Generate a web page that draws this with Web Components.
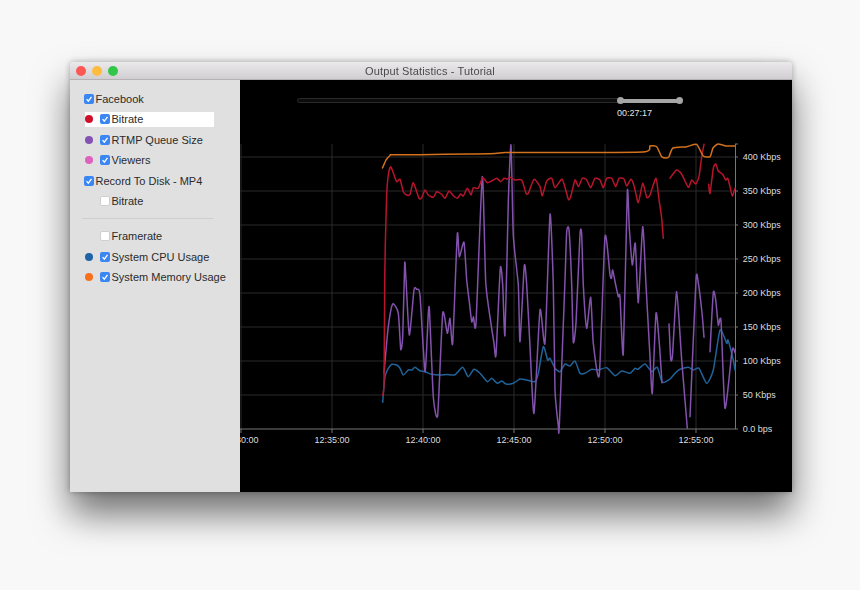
<!DOCTYPE html>
<html>
<head>
<meta charset="utf-8">
<title>Output Statistics - Tutorial</title>
<style>
    html, body { margin: 0; height: 100%; overflow: hidden; background: #f8f8f8; }
    body { padding: 62px 0 0 70px; box-sizing: border-box; font-family: "Liberation Sans", Arial, sans-serif; }
</style>
</head>
<body>
<app-window title="Output Statistics - Tutorial">
    <stats-sidebar>
        <stat-row checked top>Facebook</stat-row>
        <stat-row checked selected color="#d0102a">Bitrate</stat-row>
        <stat-row checked color="#8352b4">RTMP Queue Size</stat-row>
        <stat-row checked color="#dd62bd">Viewers</stat-row>
        <stat-row checked top>Record To Disk - MP4</stat-row>
        <stat-row>Bitrate</stat-row>
        <stat-divider></stat-divider>
        <stat-row>Framerate</stat-row>
        <stat-row checked color="#1f63a8">System CPU Usage</stat-row>
        <stat-row checked color="#f7701d">System Memory Usage</stat-row>
    </stats-sidebar>
    <stats-chart>
        <stats-range time="00:27:17"></stats-range>
    </stats-chart>
</app-window>

<script>
class AppWindow extends HTMLElement {

    constructor() {
        super();
        this.shadowDOM = this.attachShadow({ mode: "open" });
    }

    connectedCallback() {
        this.shadowDOM.innerHTML = `
        <style>
        :host {
            display: flex;
            flex-direction: column;
            width: 722px;
            height: 430px;
            border-radius: 4px 4px 1px 1px;
            box-shadow: 0 22px 36px rgba(0, 0, 0, 0.55), 0 0 6px rgba(0, 0, 0, 0.3);
            filter: blur(0.4px);
        }
        .bar {
            flex: none;
            height: 18px;
            display: flex;
            align-items: center;
            position: relative;
            background: linear-gradient(#ebe9eb, #d0ced0);
            border-radius: 4px 4px 0 0;
            box-sizing: border-box;
            border-bottom: 1px solid #b4b2b4;
        }
        .lights { display: flex; gap: 6px; padding-left: 6px; }
        .lights i { width: 10px; height: 10px; border-radius: 50%; display: block; }
        .title {
            position: absolute;
            left: 0;
            right: 0;
            padding-right: 2px;
            text-align: center;
            font-size: 11px;
            letter-spacing: 0.14px;
            color: #4a4a4a;
        }
        .body { flex: 1; display: flex; min-height: 0; }
        </style>
        <div class="bar">
            <div class="lights">
                <i style="background:#fc5753"></i>
                <i style="background:#fdbc40"></i>
                <i style="background:#33c748"></i>
            </div>
            <div class="title">${this.getAttribute("title")}</div>
        </div>
        <div class="body"><slot></slot></div>`
    }
}

class StatsSidebar extends HTMLElement {

    constructor() {
        super();
        this.shadowDOM = this.attachShadow({ mode: "open" });
    }

    connectedCallback() {
        this.shadowDOM.innerHTML = `
        <style>
        :host {
            display: block;
            flex: none;
            width: 170px;
            box-sizing: border-box;
            padding: 8.6px 0 0 15px;
            background: #e0e0e0;
            font-size: 11px;
            color: #2b2b2b;
        }
        </style>
        <slot></slot>`
    }
}

class StatRow extends HTMLElement {

    constructor() {
        super();
        this.shadowDOM = this.attachShadow({ mode: "open" });
    }

    connectedCallback() {
        const color = this.getAttribute("color")
        const checked = this.hasAttribute("checked")
        const top = this.hasAttribute("top")
        this.shadowDOM.innerHTML = `
        <style>
        :host {
            display: flex;
            align-items: center;
            height: 20.47px;
            width: 128.5px;
            white-space: nowrap;
        }
        .inner {
            display: flex;
            align-items: center;
            height: 14.5px;
            flex: 1;
        }
        :host([selected]) .inner { background: #fff; }
        .dot { flex: none; width: 8px; height: 8px; border-radius: 50%; margin-right: 7px; }
        .box {
            flex: none;
            width: 10px;
            height: 10px;
            margin-right: 1.5px;
            border-radius: 2px;
            box-sizing: border-box;
            background: #fff;
            border: 0.5px solid #cfcfcf;
        }
        .box.on { background: #3a86f2; border: 0; }
        .box svg { display: block; }
        :host([top]) .box { margin-left: -1px; }
        </style>
        <div class="inner">
            ${top ? "" : `<span class="dot" style="background:${color || "transparent"}"></span>`}
            <span class="box ${checked ? "on" : ""}">
                ${checked ? `<svg width="10" height="10" viewBox="0 0 10 10"><path d="M2.6 5.2 L4.3 7.2 L7.5 2.8" fill="none" stroke="#fff" stroke-width="1.3"/></svg>` : ""}
            </span>
            <slot></slot>
        </div>`
    }
}

class StatDivider extends HTMLElement {

    constructor() {
        super();
        this.shadowDOM = this.attachShadow({ mode: "open" });
    }

    connectedCallback() {
        this.shadowDOM.innerHTML = `
        <style>
        :host {
            display: block;
            height: 1px;
            width: 131px;
            margin: 6.75px 0 6.75px -3px;
            background: #cecece;
        }
        </style>`
    }
}

class StatsRange extends HTMLElement {

    constructor() {
        super();
        this.shadowDOM = this.attachShadow({ mode: "open" });
    }

    connectedCallback() {
        this.shadowDOM.innerHTML = `
        <style>
        :host {
            position: absolute;
            left: 57px;
            top: 17px;
            width: 383px;
            height: 30px;
            display: block;
        }
        .track {
            position: absolute;
            left: 0;
            top: 1px;
            width: 323px;
            height: 5px;
            box-sizing: border-box;
            background: #0c0c0c;
            border: 1px solid #2a2a2a;
            border-radius: 3px 0 0 3px;
        }
        .active {
            position: absolute;
            left: 323px;
            top: 1.5px;
            width: 59px;
            height: 4px;
            background: #a6a6a6;
        }
        .handle {
            position: absolute;
            top: 0;
            width: 7px;
            height: 7px;
            border-radius: 50%;
            background: #a6a6a6;
            margin-left: -3.5px;
        }
        .time {
            position: absolute;
            left: 320px;
            top: 10px;
            font-size: 9px;
            line-height: 12px;
            color: #e4e4e4;
        }
        </style>
        <div class="track"></div>
        <div class="active"></div>
        <div class="handle" style="left:323px"></div>
        <div class="handle" style="left:382px"></div>
        <div class="time">${this.getAttribute("time")}</div>`
    }
}

const SERIES = [
    { color: "#1f6399", parts: [[
        [382.7,402.3],[385,376.7],[388.3,368.3],[391.7,364.3],[396.7,365],[400,368.3],[403.3,375],[408.3,370],[412,370],[415,367.3],[420,370.7],[425,371.7],[431.7,374.3],[440,375],[447,374.5],[455,374.7],[462.7,367.3],[468.3,376.7],[474,369.3],[480,373.3],[487.3,381.7],[491.7,378.3],[497.3,383.3],[501.7,381],[506,384],[513.3,383.3],[520,379],[526.7,380],[535,381.7],[538.3,373.3],[543.3,346.7],[547.7,360],[550,358.3],[555,368.3],[560,371.7],[565,364],[570,366],[575,361],[580,373.3],[585,373.3],[591.7,369.3],[598.3,370],[606.7,367.7],[615,375.7],[621.7,371],[630,373.3],[635,368.3],[638,369.3],[645,364],[651.7,371.7],[657.3,367.3],[662.3,382.3],[670,379],[675,373.3],[680,369.3],[688.3,367.3],[693.3,370],[699,368.3],[706.7,383.3],[713.3,370],[720,330],[726.7,343.3],[728,340],[733.3,360],[735,370]
    ]] },
    { color: "#8352ad", parts: [[
        [384,373],[388.3,326.7],[392.7,304],[398.3,313.3],[400.7,349.3],[402.7,336.7],[404.7,263.3],[406,280],[409.3,335],[414,290],[416.7,289.3],[420,295],[425,371.7],[428.3,313.3],[429.5,311],[433.3,396.7],[437.7,415],[442.7,313.3],[447.3,333.3],[450,318.3],[452.7,343.3],[457.3,234.3],[459.3,256.7],[464,242.3],[466.7,280],[469.3,301.7],[471.7,321.7],[473.5,317],[476,323.3],[482.3,176.7],[485.7,281.7],[490.7,321.7],[494,343.3],[496,355],[500.3,268.3],[502.7,285],[505,335],[508.3,201.7],[511,145],[513.3,235],[518.3,285],[520,341.7],[524.3,265.7],[526.7,285],[530,346.7],[534,413.3],[540,310],[545,343],[550,214.3],[553.3,285],[555,390],[558.3,425.7],[559.3,426],[565,280],[566.7,231.7],[569,230],[571.7,285],[573.3,342.3],[576,323],[580,234.3],[581.7,234.3],[583.3,285],[586.7,328.3],[590.7,297.3],[593.3,343.3],[599.3,375],[605,236.7],[610,275],[611.5,278],[612.7,270],[615.7,285],[618.3,296.7],[620,296.7],[623.3,354],[627.3,191.7],[629.3,228.3],[632.3,265],[635.3,243.3],[638.3,302.7],[642.7,226.7],[646,285],[650,356.7],[652.3,393.3],[656,313.3],[659.3,343.3],[662,382.7]
    ], [
        [669,324],[670.7,359],[672.5,355],[676.7,291.7],[681.7,360],[687.3,428.3]
    ], [
        [690,416.7],[696,280],[698.3,283],[701.7,310],[704,337.3]
    ], [
        [710,351.7],[713.3,292.7],[715.7,300],[718.3,325],[721,320.7],[725,408.3],[731.7,353.3],[733.3,348],[735,352.7]
    ]] },
    { color: "#b8142c", parts: [[
        [382.7,395],[384,383],[384.7,285],[385.3,245],[386.7,195],[388.3,175],[390.7,166.7],[393.3,173],[396.7,181.7],[400,179.3],[403.3,191.7],[406.7,195],[410,194.3],[413.3,182.7],[419,198.3],[421.7,197.7],[425,190],[428.3,195],[433.3,197.3],[436.7,191.7],[441.7,194.3],[445,198.3],[449,191],[453.3,195.7],[457.3,198.3],[460.7,194],[463.3,196],[467.3,188.3],[471,195],[473.3,187.7],[478.3,188.3],[482.7,177.7],[487.3,182.7],[491.7,181],[496.7,178.3],[500.7,181.7],[504,178.3],[507.3,179],[510,177.3],[515,180],[521.7,180],[526,193.3],[528.3,193.3],[534,179.3],[540,186.7],[542.3,195.7],[546.7,181],[551.7,178.3],[555,187.7],[562.3,179.3],[568.3,199.3],[570.7,196.7],[575,180],[578.3,186.7],[582.3,178.3],[586.7,180],[590.7,187.7],[595,178.3],[600,180],[603.3,187.7],[606.7,178.3],[611.7,178.3],[615.7,186.7],[619,178.3],[624,179],[626.7,186],[631,179.3],[634.3,186.7],[638.3,202.7],[642.7,183.3],[646.7,197.3],[650,195],[656,178.3],[659.3,201.7],[661.7,218.3],[663.3,238.3]
    ], [
        [670,178.3],[671.7,175.7],[676.7,170],[681.7,174.3],[688.3,187.3],[691.7,180],[695.7,184],[699,176.7],[701.7,156.7],[704,144.3]
    ], [
        [708.7,184.3],[710,193.3],[713.3,168.3],[715.7,164],[718.3,171],[722.7,174.3],[725.7,180],[727.7,178.3],[730,186.7],[732.3,196],[735,188.3]
    ]] },
    { color: "#d4711d", parts: [[
        [382.5,168],[386,160],[390,155.5],[392,154.7],[420,154.7],[470,154],[495,153.5],[505,152.5],[530,152.5],[550,152.5],[643,152],[650,146],[656.7,146.7],[661.7,156.7],[666.7,158],[669,156.7],[673,148],[686.7,146.7],[696.7,144.3],[703,155.7],[710,156.7],[713,148],[718,144],[726,146],[735,146]
    ]] }
]

class StatsChart extends HTMLElement {

    constructor() {
        super();
        this.shadowDOM = this.attachShadow({ mode: "open" });
    }

    // catmull-rom through the points, low tension so the peaks stay sharp
    smooth(points) {
        let d = `M${points[0][0]} ${points[0][1]}`
        for (let i = 0; i < points.length - 1; i++) {
            const p0 = points[i - 1] || points[i]
            const p1 = points[i]
            const p2 = points[i + 1]
            const p3 = points[i + 2] || p2
            const k = 0.1
            d += ` C${(p1[0] + (p2[0] - p0[0]) * k).toFixed(1)} ${(p1[1] + (p2[1] - p0[1]) * k).toFixed(1)}`
            d += ` ${(p2[0] - (p3[0] - p1[0]) * k).toFixed(1)} ${(p2[1] - (p3[1] - p1[1]) * k).toFixed(1)}`
            d += ` ${p2[0]} ${p2[1]}`
        }
        return d
    }

    connectedCallback() {
        const kbps = ["400 Kbps", "350 Kbps", "300 Kbps", "250 Kbps", "200 Kbps", "150 Kbps", "100 Kbps", "50 Kbps", "0.0 bps"]
        const times = [[241, "12:30:00"], [332, "12:35:00"], [423, "12:40:00"], [514, "12:45:00"], [605, "12:50:00"], [696, "12:55:00"]]

        const rows = kbps.map((label, i) => {
            const y = 157 + i * 34
            const line = i < 8 ? `<line x1="240" x2="735" y1="${y}" y2="${y}" class="grid"/>` : ""
            return `${line}<line x1="735" x2="738" y1="${y}" y2="${y}" class="axis"/>
                <text x="742.7" y="${y + 3.2}">${label}</text>`
        }).join("")

        const columns = times.map(([x, label]) => `
            <line x1="${x}" x2="${x}" y1="144" y2="429" class="grid"/>
            <line x1="${x}" x2="${x}" y1="429" y2="433" class="axis"/>
            <text x="${x}" y="442.5" text-anchor="middle">${label}</text>`).join("")

        const lines = SERIES.map(s => s.parts.map(points =>
            `<path d="${this.smooth(points)}" stroke="${s.color}"/>`).join("")).join("")

        this.shadowDOM.innerHTML = `
        <style>
        :host {
            display: block;
            flex: 1;
            position: relative;
            background: #000;
        }
        svg { display: block; position: absolute; left: 0; top: 0; }
        text { font-size: 9px; fill: #dedede; font-family: "Liberation Sans", Arial, sans-serif; }
        .grid { stroke: #2b2b2b; stroke-width: 1; }
        .axis { stroke: #777; stroke-width: 1; }
        path { fill: none; stroke-width: 1.5; stroke-linejoin: round; stroke-linecap: round; }
        </style>
        <svg width="552" height="412" viewBox="240 80 552 412">
            ${rows}
            ${columns}
            <line x1="240" x2="735" y1="429" y2="429" class="axis"/>
            <line x1="735.5" x2="735.5" y1="144" y2="429" class="axis"/>
            <line x1="735" x2="738" y1="144" y2="144" class="axis"/>
            ${lines}
        </svg>
        <slot></slot>`
    }
}

customElements.define("app-window", AppWindow)
customElements.define("stats-sidebar", StatsSidebar)
customElements.define("stat-row", StatRow)
customElements.define("stat-divider", StatDivider)
customElements.define("stats-range", StatsRange)
customElements.define("stats-chart", StatsChart)
</script>
</body>
</html>
